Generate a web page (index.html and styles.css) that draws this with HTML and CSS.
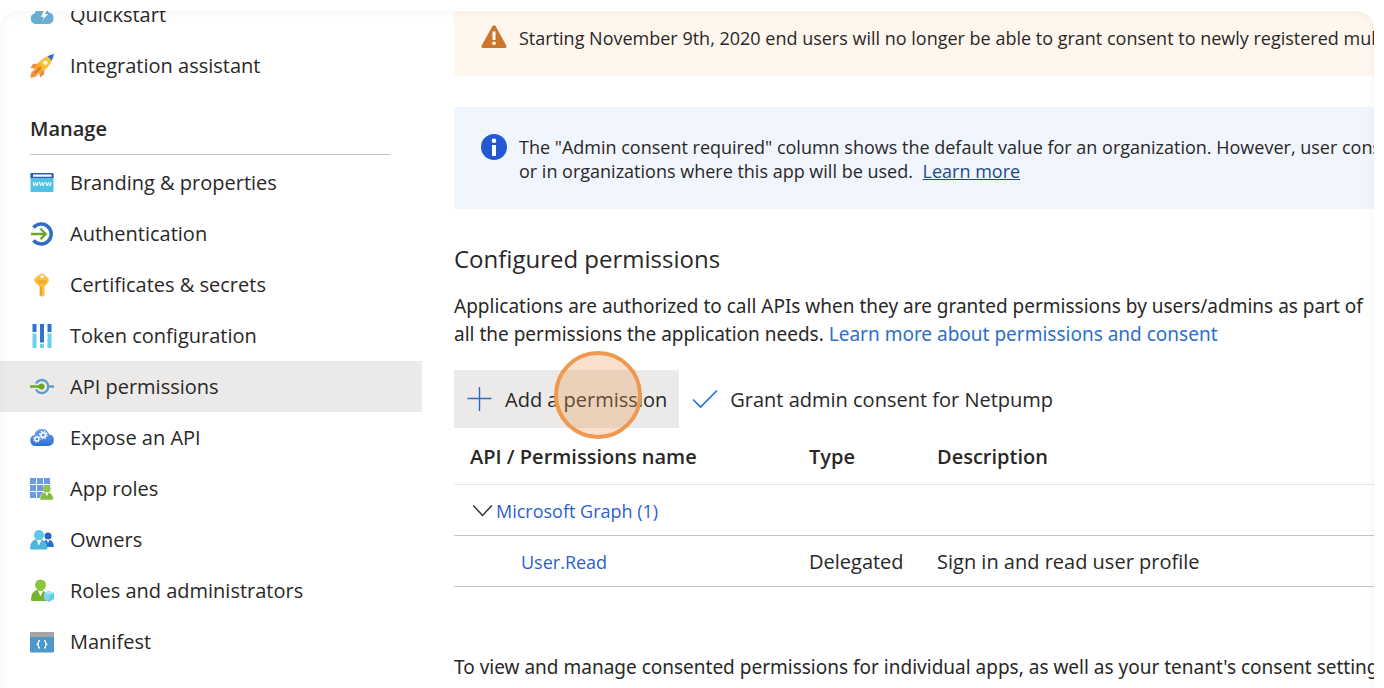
FILE: index.html
```html
<!DOCTYPE html>
<html lang="en">
<head>
<meta charset="utf-8">
<title>API permissions</title>
<link rel="stylesheet" href="styles.css">
</head>
<body>
<div class="frame">
  <nav class="sidebar" aria-label="App registration">
    <ul class="nav-list">
      <li><a class="nav-item" href="#">
        <svg class="icon" viewBox="0 0 24 24"><path d="M5.500 21A5.500 5.500 0 0 1 5 10.200 7 7 0 0 1 18.500 9.500 5.800 5.800 0 0 1 18.500 21z" fill="#69afd5"/><path d="M14 7l-3 7h3l-2 4 6-7h-3l2-4z" fill="#fff"/></svg>
        Quickstart</a></li>
      <li><a class="nav-item" href="#">
        <svg class="icon" viewBox="0 0 24 24"><path d="M8 9.500L3 10 .5 14l5 .500zM14.500 15.500L14 20.500 10 23.500 9.500 18.500z" fill="#f08a3c"/><path d="M4.500 16Q0 18 .5 23.500 6 24 8 19.500z" fill="#f5933b"/><path d="M18 2Q9 5 4 16l4 4Q19 15 22 6z" fill="#fbc02d"/><path d="M4 16l4 4 6-3Q10 12 9 8z" fill="#f8a62d"/><path d="M17.500 2.200Q21 .6 24 0 23.400 3 21.800 6.500z" fill="#2f6bd0"/><circle cx="15.300" cy="8.700" r="2.300" fill="#fff" stroke="#f6d68a"/><path d="M5.500 18.500l5-5" stroke="#d9641e" stroke-width="1.500" stroke-linecap="round"/></svg>
        Integration assistant</a></li>
    </ul>
    <h2 class="nav-heading">Manage</h2>
    <ul class="nav-list">
      <li><a class="nav-item" href="#">
        <svg class="icon" viewBox="0 0 24 24"><rect x=".5" y="2" width="23" height="19" rx="1" fill="#4fc1e3"/><path d="M.5 3a1 1 0 0 1 1-1h21a1 1 0 0 1 1 1v4H.5z" fill="#2b5fae"/><rect x="3" y="3.500" width="18.500" height="2.200" rx=".5" fill="#fff"/><path d="M3 11l1.200 4 1.400-3.500L7 15l1.200-4M9.400 11l1.200 4 1.400-3.500 1.400 3.500 1.200-4M15.800 11l1.200 4 1.400-3.500 1.400 3.500 1.200-4" fill="none" stroke="#fff" stroke-width="1"/></svg>
        Branding &amp; properties</a></li>
      <li><a class="nav-item" href="#">
        <svg class="icon" viewBox="0 0 24 24"><path d="M3.500 5.600A10 10 0 1 1 3.500 18.400" fill="none" stroke="#2e6fc4" stroke-width="3.500"/><path d="M1 12h14M10.500 6.800l5.200 5.200-5.200 5.200" fill="none" stroke="#68a728" stroke-width="2.300"/></svg>
        Authentication</a></li>
      <li><a class="nav-item" href="#">
        <svg class="icon" viewBox="0 0 24 24"><path d="M10.200 1Q12 0 13.800 1l4.500 4.500q1.500 1.500 0 3.500l-3.800 4.500V22L12 24l-2.500-2V13.500L4.700 9q-1.500-1.800 0-3.500z" fill="#fbc13c"/><path d="M10 13.500h2V24l-2-2z" fill="#f1a52c"/><circle cx="12" cy="3.600" r="1.700" fill="#fff"/><path d="M7.500 8h9M8 10h8" stroke="#e99a24" stroke-width="1.100"/></svg>
        Certificates &amp; secrets</a></li>
      <li><a class="nav-item" href="#">
        <svg class="icon" viewBox="0 0 24 24"><path d="M2.500 0h4v8h-4zM10 0h4v18.500h-4zM17.500 0h4v8h-4z" fill="#2f70d2"/><path d="M2.500 9.500h4V24h-4zM10 20h4v4h-4zM17.500 9.500h4V24h-4z" fill="#69d1ee"/></svg>
        Token configuration</a></li>
      <li><a class="nav-item selected" href="#" aria-current="page">
        <svg class="icon" viewBox="0 0 24 24"><path d="M6 8.500A6.500 6.500 0 1 1 6 14.500M18.500 11.500H24" fill="none" stroke="#5d9bcb" stroke-width="2.300"/><path d="M0 11.500h11" stroke="#6dae2b" stroke-width="2.600"/><circle cx="11.500" cy="11.500" r="3" fill="#68aa22"/></svg>
        API permissions</a></li>
      <li><a class="nav-item" href="#">
        <svg class="icon" viewBox="0 0 24 24"><defs><linearGradient id="cloud" x2="0" y2="1"><stop stop-color="#6ba0ea"/><stop offset="1" stop-color="#2f70d4"/></linearGradient></defs><path d="M5.500 20A5.600 5.600 0 0 1 4.500 9 7.500 7.500 0 0 1 19 8.300 5.900 5.900 0 0 1 18.500 20z" fill="url(#cloud)"/><g fill="none" stroke="#fff"><circle cx="6.800" cy="13" r="2" stroke-width="1.500"/><circle cx="6.800" cy="13" r="3.300" stroke-dasharray="1.300 1.290"/><circle cx="13.300" cy="9" r="2.300" stroke-width="1.600"/><circle cx="13.300" cy="9" r="3.800" stroke-width="1.200" stroke-dasharray="1.500 1.480"/></g></svg>
        Expose an API</a></li>
      <li><a class="nav-item" href="#">
        <svg class="icon" viewBox="0 0 24 24"><path d="M0 1h6v6H0zM7 1h6v6H7zM14 1h6v6h-6zM0 8h6v6H0zM7 8h6v6H7zM14 8h6v6h-6zM0 15h6v6H0zM7 15h6v6H7z" fill="#6b9ae6"/><path d="M10 23q0-8 6.500-8T23.500 23z" fill="#84bd3e" stroke="#fff" stroke-width=".5"/><circle cx="16.800" cy="11.800" r="3.800" fill="#8dc645"/><path d="M15.200 15.500h3.200l-1.600 4z" fill="#fff"/></svg>
        App roles</a></li>
      <li><a class="nav-item" href="#">
        <svg class="icon" viewBox="0 0 24 24"><circle cx="18" cy="8" r="3.500" fill="#2663c7"/><path d="M13 19q0-7.500 5-7.500T24 18.200q0 .8-1 .8z" fill="#2f6fd0"/><path d="M16.500 11.500h3.200L18 15z" fill="#fff"/><path d="M0 20.500Q0 11 8.500 11t9 9.500q0 1-1.500 1H1.500Q0 21.500 0 20.500z" fill="#4ab6dd"/><circle cx="9" cy="7" r="5" fill="#5cc7e9"/><path d="M6.500 12h5L9 17.500z" fill="#fff"/></svg>
        Owners</a></li>
      <li><a class="nav-item" href="#">
        <svg class="icon" viewBox="0 0 24 24"><path d="M1 20.500Q1 11 9 11t10 9.500q0 1.500-1.500 1.500h-15Q1 22 1 20.500z" fill="#75b32f"/><circle cx="10.500" cy="6" r="5.500" fill="#8bc73d"/><path d="M8 12h5l-2.500 5.500z" fill="#fff"/><path d="M19 12l5 2v6l-5 3-5-3v-6z" fill="#62cbe9"/><path d="M14 14l5 2 5-2-5-2z" fill="#a5e5f5"/><path d="M19 16v7l-5-3v-6z" fill="#80d9f0"/></svg>
        Roles and administrators</a></li>
      <li><a class="nav-item" href="#">
        <svg class="icon" viewBox="0 0 24 24"><rect y="2" width="24" height="20.500" rx="1" fill="#4e98c7"/><path d="M0 3a1 1 0 0 1 1-1h22a1 1 0 0 1 1 1v4H0z" fill="#a5a5a5"/><path d="M10 10.500q-1.500 0-1.500 1.500t-1.300 2.200q1.300.6 1.300 2.200T10 18M14 10.500q1.500 0 1.500 1.500t1.300 2.200q-1.300.6-1.300 2.200T14 18" fill="none" stroke="#fff" stroke-width="1.300"/></svg>
        Manifest</a></li>
    </ul>
  </nav>

  <main class="content">
    <div class="banner warning">
      <svg class="banner-icon" viewBox="0 1 26 26"><path d="M11.200 2.500q1.800-2.500 3.600 0l10.500 19q1 2.500-1.500 2.500H2.200Q-.3 24 .7 21.500z" fill="#cc762c"/><path d="M11.500 7.500h3v8.500h-3z" fill="#fff"/><circle cx="13" cy="19.300" r="1.800" fill="#fff"/></svg>
      <p>Starting November 9th, 2020 end users will no longer be able to grant consent to newly registered multitenant</p>
    </div>
    <div class="banner info">
      <svg class="banner-icon" viewBox="0 0 26 26"><circle cx="13" cy="13" r="13" fill="#2458d3"/><circle cx="13" cy="6.800" r="2.300" fill="#fff"/><path d="M11 11h4v11h-4z" fill="#fff"/></svg>
      <p>The "Admin consent required" column shows the default value for an organization. However, user consent<br>or in organizations where this app will be used. <a class="banner-link" href="#">Learn more</a></p>
    </div>

    <h1 class="title">Configured permissions</h1>
    <p class="prose">Applications are authorized to call APIs when they are granted permissions by users/admins as part of<br>all the permissions the application needs. <a class="prose-link" href="#">Learn more about permissions and consent</a></p>

    <div class="toolbar">
      <button class="command active" type="button">
        <svg class="command-icon" viewBox="0 0 26 26"><path d="M12.500 1v24M.5 12.500h24" stroke="#2c6bc4" stroke-width="1.400"/></svg>
        <span>Add a permission</span>
        <span class="pointer-ring"></span>
      </button>
      <button class="command" type="button">
        <svg class="command-icon" viewBox="0 0 26 26"><path d="M1 13.500l7.500 7.500L25 4.500" fill="none" stroke="#2c6fd0" stroke-width="1.700"/></svg>
        <span>Grant admin consent for Netpump</span>
      </button>
    </div>

    <table class="permissions">
      <thead>
        <tr><th class="col-name" scope="col">API / Permissions name</th><th class="col-type" scope="col">Type</th><th scope="col">Description</th></tr>
      </thead>
      <tbody>
        <tr><td class="group" colspan="3"><a href="#"><svg class="chevron" viewBox="0 0 22 22"><path d="M3 6l8.500 9L20 6" fill="none" stroke="#323130" stroke-width="1.300"/></svg>Microsoft Graph (1)</a></td></tr>
        <tr><td class="permission"><a href="#">User.Read</a></td><td>Delegated</td><td>Sign in and read user profile</td></tr>
      </tbody>
    </table>

    <p class="prose footnote">To view and manage consented permissions for individual apps, as well as your tenant's consent settings</p>
  </main>
</div>
</body>
</html>
```

FILE: styles.css
```css
* { box-sizing: border-box; }

body {
  margin: 0;
  padding: 11px 10px 0 0;
  height: 100vh;
  overflow: hidden;
  background: #fff;
  color: #292827;
  font-family: "Segoe UI", "Open Sans", "Noto Sans", sans-serif;
  font-size: 20px;
  line-height: 28px;
}

p, h1, h2, ul { margin: 0; padding: 0; }
a { color: #2a5fd0; text-decoration: none; }

.frame {
  position: relative;
  display: flex;
  height: 100%;
  overflow: hidden;
  border-radius: 18px 18px 0 0;
}

/* Soft inner edge drawn over the page */
.frame::after {
  content: "";
  position: absolute;
  inset: 0 0 -20px;
  border-radius: inherit;
  box-shadow: inset 0 0 12px rgba(0, 0, 0, 0.05);
  pointer-events: none;
}

.sidebar {
  flex: 0 0 422px;
  margin-top: -22px;
}

.nav-list { list-style: none; }

.nav-item {
  display: flex;
  align-items: center;
  gap: 16px;
  height: 51px;
  padding-left: 30px;
  color: inherit;
}

.selected { background: #ebeae9; }
.icon { flex: none; width: 24px; height: 24px; }

.nav-heading {
  margin: 24px 32px 2px 30px;
  padding-bottom: 11px;
  border-bottom: 1px solid #c4c3c2;
  font-size: 20px;
  font-weight: 600;
}

.content {
  flex: 1;
  min-width: 0;
  padding-left: 32px;
  white-space: nowrap;
  overflow: hidden;
}

.banner {
  display: flex;
  gap: 12px;
  padding: 27px;
  border-radius: 3px 0 0 3px;
  font-size: 18px;
  line-height: 24px;
}

.warning { margin-top: -12px; padding-bottom: 25px; background: #fff6ee; }
.info { margin-top: 31px; padding: 28px 27px 26px; background: #f0f5fe; }
.banner-icon { flex: none; width: 26px; height: 26px; margin-top: -1px; }
.banner-link { margin-left: 5px; color: #1d4a86; text-decoration: underline; }

.title {
  margin-top: 34px;
  font-size: 24px;
  font-weight: 400;
  line-height: 32px;
}

.prose {
  margin-top: 17px;
  font-family: "Segoe UI", "Noto Sans", sans-serif;
  font-size: 19px;
}
.prose-link { color: #2c70c9; }

.toolbar { display: flex; margin-top: 22px; }

.command {
  position: relative;
  display: flex;
  align-items: center;
  gap: 12px;
  height: 58px;
  padding: 0 12px 0 13px;
  border: 0;
  background: none;
  color: inherit;
  font: inherit;
}

.command span { padding-top: 2px; }
.active { background: #ebeae9; }
.command-icon { flex: none; width: 26px; height: 26px; }

.pointer-ring {
  position: absolute;
  top: -19px;
  left: 100px;
  width: 88px;
  height: 88px;
  border: 4px solid #ef9850;
  border-radius: 50%;
  background: rgba(239, 152, 80, 0.3);
}

.permissions {
  width: 100%;
  table-layout: fixed;
  border-collapse: collapse;
}

.permissions th, .permissions td {
  height: 51px;
  padding: 2px 16px 0;
  border-bottom: 1px solid #c4c3c2;
  text-align: left;
}

.permissions th {
  height: 56px;
  border-color: #e6e5e4;
  font-weight: 600;
}

.col-name { width: 339px; }
.col-type { width: 128px; }
.permissions a { font-size: 18px; }
.permissions .group a { display: flex; align-items: center; gap: 2px; }
.chevron { width: 24px; height: 24px; }
.permissions .permission { padding-left: 67px; }

.footnote { margin-top: 66px; }
```
